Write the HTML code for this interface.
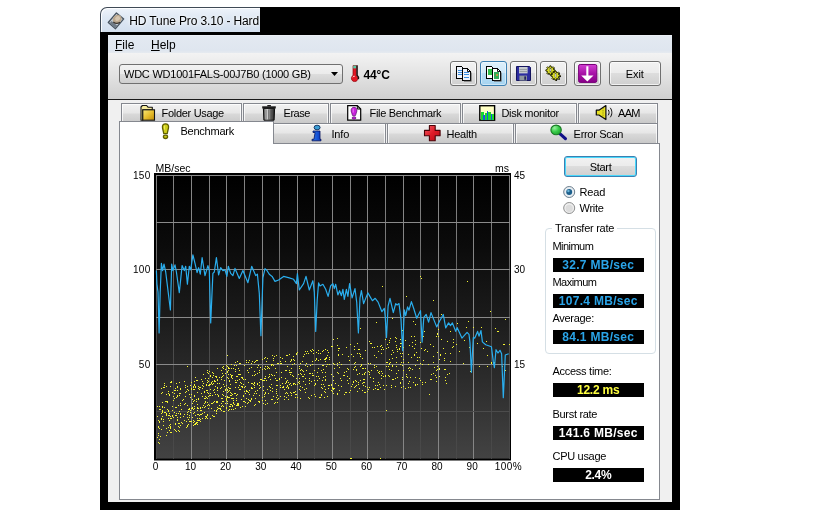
<!DOCTYPE html>
<html><head><meta charset="utf-8"><title>HD Tune Pro</title>
<style>
html,body{margin:0;padding:0;background:#fff;}
body{will-change:transform;width:840px;height:525px;overflow:hidden;position:relative;font-family:"Liberation Sans",sans-serif;font-size:11px;color:#000;}
.abs{position:absolute;}
.frame{left:100px;top:32px;width:580px;height:478px;background:#000;}
.title{overflow:hidden;left:100px;top:7px;width:160px;height:25px;box-sizing:border-box;border-top:1px solid #5a6470;border-left:1px solid #5a6470;border-radius:7px 0 0 0;background:linear-gradient(#eef3fa,#dee8f4 40%,#d3dfee);box-shadow:inset 1px 1px 0 rgba(255,255,255,.85);border-color:#3f4a56;}
.title .txt{left:28.3px;top:6px;font-size:12px;letter-spacing:-0.13px;white-space:nowrap;color:#000;text-shadow:0 0 6px #fff,0 0 3px #fff;}
.client{left:108px;top:35px;width:564px;height:467px;background:#f0f0f0;}
.menubar{left:108px;top:35px;width:564px;height:18.5px;background:linear-gradient(#f0f3f8 0,#e3e9f1 7%,#dfe6ef 82%,#e9ecf0 100%);}
.menubar span{position:absolute;top:3px;font-size:12px;}
.toolbar{left:108px;top:53px;width:564px;height:46px;background:linear-gradient(#f3f3f3,#e2e2e2 50%,#cfcfcf);}
.tbline{left:108px;top:98.7px;width:564px;height:1.3px;background:#1a1a1a;}
.combo{left:119px;top:63.5px;width:223.5px;height:20px;box-sizing:border-box;border:1px solid #707070;border-radius:3px;background:linear-gradient(#f2f2f2,#ebebeb 50%,#dddddd 50%,#cfcfcf);}
.combo .t{left:4px;top:3px;white-space:nowrap;font-size:11px;letter-spacing:-0.23px;}
.btn{box-sizing:border-box;border:1px solid #707070;border-radius:3px;background:linear-gradient(#f2f2f2,#ebebeb 50%,#dddddd 50%,#cfcfcf);box-shadow:inset 0 0 0 1px rgba(255,255,255,.7);}
.btn.hot{border-color:#3c7fb1;background:linear-gradient(#def0fb,#cfe8f9 50%,#b6ddf6 50%,#a6d4f0);box-shadow:inset 0 0 0 1px rgba(255,255,255,.45);}
.tab{box-sizing:border-box;border:1px solid #85888f;background:linear-gradient(#f2f2f2,#e6e6e6 48%,#d9d9d9 52%,#c9c9c9);white-space:nowrap;box-shadow:inset 1px 1px 0 rgba(255,255,255,.75),inset -1px 0 0 rgba(255,255,255,.75);}
.tab span,.seltab span{position:absolute;top:3px;}
.seltab{box-sizing:border-box;border:1px solid #85888f;border-bottom:none;background:#fff;}
.panel{left:119px;top:143px;width:541px;height:357px;box-sizing:border-box;border:1px solid #85888f;background:#fff;}
.lbl{white-space:nowrap;font-size:11px;}
.val{left:552.5px;width:91.5px;height:14px;background:#000;text-align:center;font-weight:bold;font-size:12px;line-height:14px;white-space:nowrap;letter-spacing:0.3px;}
.ax{font-size:10px;white-space:nowrap;line-height:10px;}
svg.chart{position:absolute;left:0;top:0;}
svg.ic{position:absolute;overflow:visible;}
.group{left:545px;top:227.5px;width:110.5px;height:126px;box-sizing:border-box;border:1px solid #d5dfe5;border-radius:4px;}
</style></head><body>
<div class="abs" style="left:260px;top:7px;width:420px;height:26px;background:#000"></div><div class="abs frame"></div>
<div class="abs title"><span class="abs txt">HD Tune Pro 3.10 - Hard</span>

</div>
<div class="abs client"></div>
<div class="abs menubar"><span style="left:7px"><u>F</u>ile</span><span style="left:43px"><u>H</u>elp</span></div>
<div class="abs toolbar"></div>
<div class="abs tbline"></div>
<div class="abs combo"><span class="abs t">WDC WD1001FALS-00J7B0 (1000 GB)</span>
<svg class="ic" style="left:210.5px;top:7px" width="8" height="5"><path d="M0 0H7L3.5 4Z" fill="#000"/></svg></div>
<!-- thermometer -->

<div class="abs lbl" style="left:363.6px;top:68.4px;font-weight:bold;font-size:12px;letter-spacing:-0.2px">44°C</div>
<!-- toolbar buttons -->
<div class="abs btn" style="left:450.3px;top:61.3px;width:26.4px;height:25.2px"></div>
<div class="abs btn hot" style="left:480px;top:61.3px;width:26.7px;height:25.2px"></div>
<div class="abs btn" style="left:510.3px;top:61.3px;width:26.4px;height:25.2px"></div>
<div class="abs btn" style="left:540px;top:61.3px;width:27px;height:25.2px"></div>
<div class="abs btn" style="left:574px;top:61.3px;width:27px;height:25.2px"></div>
<div class="abs btn" style="left:609px;top:61.3px;width:52px;height:25.2px"><span class="abs lbl" style="left:15.8px;top:5.5px;letter-spacing:-0.12px">Exit</span></div>
<!-- tabs row 1 -->
<div class="abs tab" style="left:121px;top:103px;width:121px;height:21px"></div>
<div class="abs tab" style="left:243px;top:103px;width:86px;height:21px"></div>
<div class="abs tab" style="left:330px;top:103px;width:131px;height:21px"></div>
<div class="abs tab" style="left:462px;top:103px;width:115px;height:21px"></div>
<div class="abs tab" style="left:578px;top:103px;width:80px;height:21px"></div>
<!-- tabs row 2 -->
<div class="abs tab" style="left:272px;top:123px;width:114px;height:21px"></div>
<div class="abs tab" style="left:387px;top:123px;width:127px;height:21px"></div>
<div class="abs tab" style="left:515px;top:123px;width:143px;height:21px"></div>
<div class="abs panel"></div>
<div class="abs seltab" style="left:119px;top:121px;width:155px;height:23px"></div>
<div class="abs lbl" style="left:161.5px;top:107.2px;letter-spacing:-0.3px">Folder Usage</div>
<div class="abs lbl" style="left:283.6px;top:107.2px;letter-spacing:-0.5px">Erase</div>
<div class="abs lbl" style="left:369.6px;top:107.2px;letter-spacing:-0.34px">File Benchmark</div>
<div class="abs lbl" style="left:501.4px;top:107.2px;letter-spacing:-0.3px">Disk monitor</div>
<div class="abs lbl" style="left:617.9px;top:107.2px;letter-spacing:-0.6px">AAM</div>
<div class="abs lbl" style="left:331.4px;top:127.6px;letter-spacing:-0.15px">Info</div>
<div class="abs lbl" style="left:446.4px;top:127.6px;letter-spacing:-0.2px">Health</div>
<div class="abs lbl" style="left:573.6px;top:127.6px;letter-spacing:-0.3px">Error Scan</div>
<div class="abs lbl" style="left:180.5px;top:125.2px;letter-spacing:-0.24px">Benchmark</div>

<svg class="chart" width="840" height="525" viewBox="0 0 840 525">
<defs>
<linearGradient id="fg" x1="0" y1="0" x2="1" y2="1"><stop offset="0" stop-color="#fbea7a"/><stop offset=".5" stop-color="#e8c030"/><stop offset="1" stop-color="#c08c08"/></linearGradient>
<linearGradient id="tg" x1="0" y1="0" x2="1" y2="0"><stop offset="0" stop-color="#3a3a3a"/><stop offset=".3" stop-color="#e2e2e2"/><stop offset=".55" stop-color="#8a8a8a"/><stop offset="1" stop-color="#181818"/></linearGradient>
<linearGradient id="pg" x1="0" y1="0" x2="0" y2="1"><stop offset="0" stop-color="#d240d2"/><stop offset=".5" stop-color="#a812a8"/><stop offset="1" stop-color="#880088"/></linearGradient>
<linearGradient id="rg" x1="0" y1="0" x2="1" y2="1"><stop offset="0" stop-color="#f0606a"/><stop offset=".5" stop-color="#e01c28"/><stop offset="1" stop-color="#b00c14"/></linearGradient>
<radialGradient id="gg" cx=".35" cy=".3" r=".8"><stop offset="0" stop-color="#9af0a0"/><stop offset=".5" stop-color="#38cc48"/><stop offset="1" stop-color="#1c9c2c"/></radialGradient>
<linearGradient id="ig" x1="0" y1="0" x2="1" y2="0"><stop offset="0" stop-color="#2a78f0"/><stop offset="1" stop-color="#0838c0"/></linearGradient>
</defs>
<!-- title icon -->
<path d="M116.4 12.9 L123.7 18.9 L115.5 28.7 L108.3 22.5Z" fill="#c5ced8" stroke="#46525e" stroke-width="1.3" stroke-linejoin="round"/>
<path d="M109.6 23.3 L115.3 28.2 L117.3 25.8 L111.6 21z" fill="#6f7b87"/>
<ellipse cx="117.2" cy="19.2" rx="4.7" ry="4.1" fill="#bba88f" transform="rotate(-38 117.2 19.2)"/>
<ellipse cx="117.6" cy="18.6" rx="2.6" ry="2.2" fill="#d6c6b0" transform="rotate(-38 117.6 18.6)"/>
<path d="M113.3 22 Q116.5 24.6 120 22.2" stroke="#3c3630" stroke-width="1.3" fill="none"/>
<!-- thermometer -->
<path d="M353 65.6h3.3v9.8a3.3 3.3 0 1 1 -3.3 0z" fill="#e31522" stroke="#8a0a10" stroke-width=".7"/>
<rect x="353.2" y="65.6" width="2.9" height="2.8" fill="#58c8a4"/>
<path d="M357.1 65.3v10a3.7 3.7 0 0 1 1.3 3.8" stroke="#160c0c" stroke-width="1.4" fill="none"/>
<path d="M352.9 77.2a1.6 1.6 0 0 1 1.8 -.9" stroke="#fff" stroke-width=".9" fill="none"/>
<!-- copy icon -->
<g shape-rendering="crispEdges"><path d="M456.5 66.5h5l2 2v10h-7z" fill="#eef4fc" stroke="#000"/><path d="M458 70.5h4M458 72.5h4M458 74.5h4" stroke="#3b8ee0"/>
<path d="M462.5 68.5h5l3 3v9h-8z" fill="#eef4fc" stroke="#000"/><path d="M464 72.5h5M464 74.5h5M464 77.5h5" stroke="#3b8ee0"/></g>
<path d="M467.5 68.5v3h3" fill="none" stroke="#000" stroke-width=".9"/><path d="M471.3 72.5v8.8h-7.3" stroke="#666" stroke-width=".8" fill="none"/>
<!-- copy image icon -->
<g shape-rendering="crispEdges"><path d="M486.5 66.5h5l2 2v10h-7z" fill="#fff" stroke="#000"/><rect x="488" y="69" width="4" height="6" fill="#2fc04a"/>
<path d="M492.5 68.5h5l3 3v9h-8z" fill="#fff" stroke="#000"/><rect x="494" y="72" width="5" height="7" fill="#35ac5a"/><rect x="496" y="74" width="2" height="2" fill="#b89a40"/></g>
<path d="M497.5 68.5v3h3" fill="none" stroke="#000" stroke-width=".9"/><path d="M501.3 72.5v8.8h-7.3" stroke="#666" stroke-width=".8" fill="none"/>
<!-- floppy -->
<path d="M516.5 66.5h13l1 1v13h-14z" fill="#2c2ca0" stroke="#14145e"/><rect x="519" y="67" width="8.6" height="6.4" fill="#c6cacf"/><path d="M519.5 69.5h7.6M519.5 71.5h7.6" stroke="#8e9499" stroke-width=".8"/><rect x="519.4" y="75.6" width="7.6" height="4.9" fill="#8f979f"/><rect x="524.3" y="76.4" width="1.8" height="3.4" fill="#22225e"/>
<!-- gears -->
<path d="M555.77 70.65L555.77 71.75L554.38 72.09L554.08 72.82L554.82 74.04L554.04 74.82L552.82 74.08L552.09 74.38L551.75 75.77L550.65 75.77L550.31 74.38L549.58 74.08L548.36 74.82L547.58 74.04L548.32 72.82L548.02 72.09L546.63 71.75L546.63 70.65L548.02 70.31L548.32 69.58L547.58 68.36L548.36 67.58L549.58 68.32L550.31 68.02L550.65 66.63L551.75 66.63L552.09 68.02L552.82 68.32L554.04 67.58L554.82 68.36L554.08 69.58L554.38 70.31Z" fill="#111"/><path d="M560.97 75.85L560.97 76.95L559.58 77.29L559.28 78.02L560.02 79.24L559.24 80.02L558.02 79.28L557.29 79.58L556.95 80.97L555.85 80.97L555.51 79.58L554.78 79.28L553.56 80.02L552.78 79.24L553.52 78.02L553.22 77.29L551.83 76.95L551.83 75.85L553.22 75.51L553.52 74.78L552.78 73.56L553.56 72.78L554.78 73.52L555.51 73.22L555.85 71.83L556.95 71.83L557.29 73.22L558.02 73.52L559.24 72.78L560.02 73.56L559.28 74.78L559.58 75.51Z" fill="#111"/>
<path d="M554.97 69.85L554.97 70.95L553.58 71.29L553.28 72.02L554.02 73.24L553.24 74.02L552.02 73.28L551.29 73.58L550.95 74.97L549.85 74.97L549.51 73.58L548.78 73.28L547.56 74.02L546.78 73.24L547.52 72.02L547.22 71.29L545.83 70.95L545.83 69.85L547.22 69.51L547.52 68.78L546.78 67.56L547.56 66.78L548.78 67.52L549.51 67.22L549.85 65.83L550.95 65.83L551.29 67.22L552.02 67.52L553.24 66.78L554.02 67.56L553.28 68.78L553.58 69.51Z" fill="#d8dc24" stroke="#262600" stroke-width=".9"/><path d="M560.07 75.05L560.07 76.15L558.68 76.49L558.38 77.22L559.12 78.44L558.34 79.22L557.12 78.48L556.39 78.78L556.05 80.17L554.95 80.17L554.61 78.78L553.88 78.48L552.66 79.22L551.88 78.44L552.62 77.22L552.32 76.49L550.93 76.15L550.93 75.05L552.32 74.71L552.62 73.98L551.88 72.76L552.66 71.98L553.88 72.72L554.61 72.42L554.95 71.03L556.05 71.03L556.39 72.42L557.12 72.72L558.34 71.98L559.12 72.76L558.38 73.98L558.68 74.71Z" fill="#d8dc24" stroke="#262600" stroke-width=".9"/>
<rect x="549.9" y="68.2" width="1.1" height="3.8" fill="#f0f0f0" stroke="#444" stroke-width=".4"/><rect x="555" y="73.4" width="1.1" height="3.8" fill="#f0f0f0" stroke="#444" stroke-width=".4"/>
<!-- purple arrow -->
<rect x="578.6" y="64.5" width="18.2" height="17.9" rx="1.6" fill="url(#pg)" stroke="#780078"/><path d="M586.3 66.2h2.1v9.3h5.1l-6.15 6.1-6.15-6.1h5.1z" fill="#fff"/>
<!-- folder -->
<path d="M141 107 142.4 105.5h4.2l1.4 1.7h4.3v2.6H142.8v10.4H141z" fill="#f6eb9c" stroke="#141414" stroke-width="1.1" stroke-linejoin="round"/>
<rect x="142.8" y="109.8" width="11.7" height="10.4" fill="url(#fg)" stroke="#141414" stroke-width="1.1"/>
<!-- trash -->
<path d="M263.4 108.4h11.2l-.5 11.8h-10.2z" fill="url(#tg)" stroke="#0a0a0a" stroke-width="1"/>
<path d="M266.3 109.5v10M268.6 109.5v10M271 109.5v10" stroke="#222" stroke-width=".6" opacity=".7"/>
<rect x="262.2" y="106.3" width="13.6" height="2.2" fill="#1c1c1c"/><rect x="267.3" y="105" width="3.6" height="1.5" fill="#1c1c1c"/>
<!-- file benchmark -->
<path d="M347.7 105.6h9.6l3.4 3.4v11.2h-13z" fill="#fff" stroke="#000" stroke-width="1.2"/><path d="M357.3 105.6v3.4h3.4" fill="none" stroke="#000" stroke-width="1"/>
<path d="M354 107.3c2.2 0 3.2 1.8 2.8 3.9l-1.3 4.4h-3l-1.3-4.4c-.4-2.1.6-3.9 2.8-3.9z" fill="#c822dc" stroke="#5c0a72" stroke-width=".7"/><path d="M353.2 108.6v4" stroke="#ee8af8" stroke-width=".9"/>
<ellipse cx="354" cy="118" rx="1.9" ry="1.2" fill="#c822dc" stroke="#5c0a72" stroke-width=".7"/>
<!-- disk monitor -->
<rect x="479.8" y="105.7" width="14.8" height="14.5" fill="#ffffc4" stroke="#000" stroke-width="1.4"/>
<g shape-rendering="crispEdges"><rect x="481" y="112" width="3" height="8" fill="#1cd82c"/><rect x="483" y="115" width="2" height="5" fill="#1c58d8"/><rect x="485" y="113" width="2" height="7" fill="#1cd82c"/><rect x="487" y="111" width="1" height="9" fill="#1c58d8"/><rect x="488" y="112" width="3" height="8" fill="#1cd82c"/><rect x="491" y="114" width="2" height="6" fill="#1c58d8"/><rect x="492" y="114" width="2" height="6" fill="#1cd82c"/></g>
<!-- speaker -->
<path d="M596.3 110.2h2.6l7-4.6v14l-7-4.6h-2.6z" fill="#e6e022" stroke="#0a0a0a" stroke-width="1.2" stroke-linejoin="round"/><path d="M603 108v9.6" stroke="#6a6600" stroke-width=".7" stroke-dasharray="1.2 1"/>
<path d="M608.2 109.8c1.2 1.6 1.2 3.9 0 5.5M610.2 107.8c2.2 2.8 2.2 6.700 0 9.500" stroke="#111" stroke-width="1" fill="none"/>
<!-- exclamation -->
<path d="M165.5 123.8c2.300 0 3.400 1.800 3 4l-1.300 5.800h-3.400l-1.300-5.800c-.4-2.200.7-4 3-4z" fill="#cfcf18" stroke="#5e5e00" stroke-width="1.3"/>
<path d="M164.600 125.600v4" stroke="#f0f070" stroke-width=".9"/>
<ellipse cx="165.5" cy="136.850" rx="2.100" ry="1.650" fill="#cfcf18" stroke="#5e5e00" stroke-width="1.3"/>
<!-- info -->
<ellipse cx="317.1" cy="127.500" rx="3" ry="2.300" fill="#3c9ed4" stroke="#0c2c5c" stroke-width=".9"/>
<path d="M313 131h7v8.300h1v1.500h-9v-1.500h1.900l1.200-6.800h-2.100z" fill="url(#ig)" stroke="#04105c" stroke-width=".8" stroke-linejoin="round"/>
<!-- cross -->
<path d="M429.400 125.500h5.800v4.900h4.900v5.400h-4.900v4.900h-5.800v-4.900h-4.900v-5.400h4.900z" fill="url(#rg)" stroke="#4a0408" stroke-width="1.100" stroke-linejoin="round"/>
<!-- magnifier -->
<path d="M559.800 133.600l5.600 5" stroke="#101088" stroke-width="3.200" stroke-linecap="round"/>
<ellipse cx="556.100" cy="129.900" rx="5.200" ry="4.800" fill="url(#gg)" stroke="#187a24" stroke-width="1.100"/>
</svg>
<svg class="chart" width="840" height="525" viewBox="0 0 840 525">
<defs><linearGradient id="bg" x1="0" y1="0" x2="0" y2="1"><stop offset="0" stop-color="#000"/><stop offset="0.25" stop-color="#0b0b0b"/><stop offset="0.5" stop-color="#1b1b1b"/><stop offset="0.75" stop-color="#2e2e2e"/><stop offset="1" stop-color="#434343"/></linearGradient><linearGradient id="mg" gradientUnits="userSpaceOnUse" x1="0" y1="175" x2="0" y2="459"><stop offset="0" stop-color="#848484"/><stop offset="0.22" stop-color="#787878"/><stop offset="0.4" stop-color="#5a5a5a"/><stop offset="0.6" stop-color="#4c4c4c"/><stop offset="0.8" stop-color="#484848"/><stop offset="1" stop-color="#494949"/></linearGradient></defs>
<rect x="154" y="173" width="357" height="287.5" fill="#000"/>
<rect x="156" y="175" width="354" height="283.6" fill="url(#bg)"/>
<g shape-rendering="crispEdges" fill="none" stroke-width="1">
<path d="M156.5 175V458.6M173.5 175V458.6M209.5 175V458.6M244.5 175V458.6M279.5 175V458.6M314.5 175V458.6M350.5 175V458.6M385.5 175V458.6M420.5 175V458.6M456.5 175V458.6M491.5 175V458.6M509.5 175V458.6" stroke="url(#mg)"/>
<path d="M191.5 175V458.6M226.5 175V458.6M262.5 175V458.6M297.5 175V458.6M332.5 175V458.6M367.5 175V458.6M403.5 175V458.6M438.5 175V458.6M473.5 175V458.6" stroke="#868686"/>
<path d="M156 175.5H510" stroke="#8a8a8a"/>
<path d="M156 222.5H510" stroke="#8a8a8a"/>
<path d="M156 269.5H510" stroke="#8a8a8a"/>
<path d="M156 317.5H510" stroke="#8a8a8a"/>
<path d="M156 364.5H510" stroke="#8a8a8a"/>
<path d="M156 411.5H510" stroke="#4c4c4c"/>
</g>
<path id="dots" d="M271 374h1v1h-1zM346 392h1v1h-1zM170 432h1v1h-1zM201 393h1v1h-1zM360 328h1v1h-1zM259 401h1v1h-1zM445 353h1v1h-1zM288 399h1v1h-1zM230 392h1v1h-1zM363 379h1v1h-1zM403 359h1v1h-1zM199 387h1v1h-1zM329 364h1v1h-1zM268 377h1v1h-1zM391 354h1v1h-1zM257 367h1v1h-1zM216 413h1v1h-1zM203 405h1v1h-1zM185 403h1v1h-1zM255 391h1v1h-1zM219 405h1v1h-1zM365 392h1v1h-1zM287 355h1v1h-1zM395 341h1v1h-1zM295 397h1v1h-1zM179 423h1v1h-1zM277 402h1v1h-1zM193 425h1v1h-1zM373 381h1v1h-1zM285 361h1v1h-1zM321 394h1v1h-1zM278 363h1v1h-1zM165 412h1v1h-1zM348 369h1v1h-1zM249 400h1v1h-1zM273 365h1v1h-1zM237 394h1v1h-1zM255 374h1v1h-1zM285 393h1v1h-1zM229 368h1v1h-1zM326 357h1v1h-1zM325 358h1v1h-1zM296 354h1v1h-1zM217 409h1v1h-1zM441 339h1v1h-1zM389 363h1v1h-1zM162 406h1v1h-1zM231 398h1v1h-1zM364 373h1v1h-1zM318 353h1v1h-1zM344 394h1v1h-1zM222 376h1v1h-1zM353 369h1v1h-1zM433 356h1v1h-1zM313 375h1v1h-1zM401 362h1v1h-1zM248 362h1v1h-1zM205 401h1v1h-1zM242 378h1v1h-1zM207 372h1v1h-1zM450 361h1v1h-1zM276 389h1v1h-1zM164 412h1v1h-1zM377 389h1v1h-1zM194 424h1v1h-1zM252 388h1v1h-1zM210 393h1v1h-1zM189 394h1v1h-1zM183 399h1v1h-1zM187 426h1v1h-1zM317 372h1v1h-1zM251 383h1v1h-1zM196 423h1v1h-1zM267 368h1v1h-1zM333 376h1v1h-1zM162 412h1v1h-1zM194 406h1v1h-1zM381 375h1v1h-1zM203 386h1v1h-1zM215 376h1v1h-1zM393 379h1v1h-1zM319 378h1v1h-1zM350 344h1v1h-1zM283 386h1v1h-1zM334 368h1v1h-1zM189 421h1v1h-1zM239 385h1v1h-1zM210 375h1v1h-1zM206 397h1v1h-1zM238 404h1v1h-1zM194 400h1v1h-1zM329 357h1v1h-1zM334 364h1v1h-1zM417 384h1v1h-1zM414 348h1v1h-1zM331 374h1v1h-1zM383 385h1v1h-1zM419 357h1v1h-1zM252 375h1v1h-1zM259 385h1v1h-1zM199 415h1v1h-1zM487 355h1v1h-1zM252 361h1v1h-1zM362 368h1v1h-1zM204 398h1v1h-1zM405 340h1v1h-1zM166 413h1v1h-1zM263 390h1v1h-1zM453 342h1v1h-1zM199 389h1v1h-1zM259 388h1v1h-1zM365 372h1v1h-1zM174 390h1v1h-1zM251 399h1v1h-1zM174 412h1v1h-1zM384 389h1v1h-1zM202 407h1v1h-1zM249 394h1v1h-1zM296 394h1v1h-1zM235 362h1v1h-1zM206 417h1v1h-1zM189 417h1v1h-1zM302 376h1v1h-1zM276 391h1v1h-1zM201 393h1v1h-1zM233 400h1v1h-1zM165 401h1v1h-1zM324 397h1v1h-1zM245 402h1v1h-1zM351 354h1v1h-1zM264 394h1v1h-1zM403 386h1v1h-1zM362 383h1v1h-1zM161 419h1v1h-1zM324 386h1v1h-1zM405 388h1v1h-1zM395 378h1v1h-1zM169 415h1v1h-1zM227 377h1v1h-1zM229 397h1v1h-1zM238 374h1v1h-1zM223 395h1v1h-1zM296 353h1v1h-1zM175 415h1v1h-1zM273 358h1v1h-1zM168 418h1v1h-1zM274 403h1v1h-1zM201 414h1v1h-1zM309 378h1v1h-1zM168 393h1v1h-1zM171 432h1v1h-1zM374 355h1v1h-1zM254 371h1v1h-1zM166 415h1v1h-1zM245 386h1v1h-1zM221 379h1v1h-1zM272 388h1v1h-1zM185 392h1v1h-1zM180 405h1v1h-1zM187 405h1v1h-1zM314 380h1v1h-1zM200 410h1v1h-1zM227 401h1v1h-1zM272 355h1v1h-1zM239 379h1v1h-1zM193 386h1v1h-1zM479 366h1v1h-1zM224 386h1v1h-1zM315 360h1v1h-1zM194 396h1v1h-1zM287 393h1v1h-1zM229 397h1v1h-1zM222 405h1v1h-1zM350 390h1v1h-1zM189 394h1v1h-1zM257 360h1v1h-1zM357 374h1v1h-1zM226 388h1v1h-1zM319 397h1v1h-1zM188 411h1v1h-1zM208 396h1v1h-1zM195 386h1v1h-1zM227 366h1v1h-1zM327 350h1v1h-1zM447 341h1v1h-1zM449 373h1v1h-1zM339 390h1v1h-1zM171 382h1v1h-1zM198 398h1v1h-1zM265 378h1v1h-1zM389 359h1v1h-1zM329 359h1v1h-1zM318 376h1v1h-1zM202 418h1v1h-1zM337 365h1v1h-1zM337 372h1v1h-1zM225 390h1v1h-1zM180 393h1v1h-1zM444 358h1v1h-1zM230 388h1v1h-1zM170 428h1v1h-1zM216 411h1v1h-1zM381 345h1v1h-1zM194 396h1v1h-1zM438 329h1v1h-1zM313 350h1v1h-1zM246 360h1v1h-1zM391 387h1v1h-1zM374 367h1v1h-1zM204 391h1v1h-1zM282 387h1v1h-1zM229 390h1v1h-1zM210 389h1v1h-1zM433 362h1v1h-1zM355 362h1v1h-1zM245 406h1v1h-1zM300 398h1v1h-1zM161 388h1v1h-1zM227 389h1v1h-1zM444 369h1v1h-1zM174 393h1v1h-1zM159 406h1v1h-1zM237 394h1v1h-1zM251 388h1v1h-1zM341 364h1v1h-1zM233 409h1v1h-1zM240 363h1v1h-1zM273 360h1v1h-1zM265 376h1v1h-1zM166 386h1v1h-1zM207 418h1v1h-1zM417 357h1v1h-1zM229 409h1v1h-1zM258 401h1v1h-1zM229 388h1v1h-1zM257 390h1v1h-1zM168 415h1v1h-1zM279 378h1v1h-1zM446 383h1v1h-1zM159 422h1v1h-1zM222 398h1v1h-1zM257 373h1v1h-1zM196 422h1v1h-1zM378 372h1v1h-1zM470 371h1v1h-1zM239 385h1v1h-1zM280 396h1v1h-1zM217 379h1v1h-1zM201 379h1v1h-1zM224 380h1v1h-1zM211 408h1v1h-1zM341 380h1v1h-1zM193 422h1v1h-1zM226 407h1v1h-1zM294 383h1v1h-1zM401 356h1v1h-1zM207 402h1v1h-1zM305 365h1v1h-1zM383 376h1v1h-1zM191 388h1v1h-1zM379 371h1v1h-1zM376 357h1v1h-1zM221 377h1v1h-1zM170 428h1v1h-1zM193 401h1v1h-1zM231 393h1v1h-1zM200 407h1v1h-1zM254 405h1v1h-1zM305 384h1v1h-1zM236 365h1v1h-1zM234 393h1v1h-1zM203 383h1v1h-1zM322 388h1v1h-1zM281 363h1v1h-1zM322 372h1v1h-1zM290 383h1v1h-1zM158 433h1v1h-1zM263 386h1v1h-1zM389 340h1v1h-1zM177 386h1v1h-1zM206 390h1v1h-1zM245 402h1v1h-1zM430 379h1v1h-1zM436 336h1v1h-1zM453 346h1v1h-1zM250 401h1v1h-1zM178 426h1v1h-1zM333 339h1v1h-1zM322 365h1v1h-1zM289 354h1v1h-1zM167 401h1v1h-1zM337 338h1v1h-1zM377 346h1v1h-1zM324 359h1v1h-1zM310 373h1v1h-1zM299 389h1v1h-1zM436 370h1v1h-1zM433 346h1v1h-1zM349 378h1v1h-1zM402 353h1v1h-1zM392 350h1v1h-1zM221 377h1v1h-1zM388 347h1v1h-1zM355 380h1v1h-1zM269 374h1v1h-1zM176 431h1v1h-1zM162 410h1v1h-1zM302 370h1v1h-1zM210 418h1v1h-1zM200 419h1v1h-1zM202 388h1v1h-1zM415 385h1v1h-1zM414 355h1v1h-1zM410 387h1v1h-1zM445 369h1v1h-1zM215 394h1v1h-1zM286 382h1v1h-1zM208 404h1v1h-1zM379 373h1v1h-1zM357 391h1v1h-1zM274 356h1v1h-1zM369 372h1v1h-1zM290 374h1v1h-1zM158 427h1v1h-1zM172 392h1v1h-1zM358 349h1v1h-1zM279 378h1v1h-1zM228 367h1v1h-1zM321 387h1v1h-1zM188 390h1v1h-1zM325 389h1v1h-1zM221 398h1v1h-1zM299 378h1v1h-1zM289 372h1v1h-1zM212 403h1v1h-1zM164 383h1v1h-1zM328 385h1v1h-1zM170 427h1v1h-1zM175 388h1v1h-1zM180 413h1v1h-1zM295 394h1v1h-1zM171 418h1v1h-1zM174 398h1v1h-1zM208 373h1v1h-1zM262 369h1v1h-1zM271 399h1v1h-1zM216 410h1v1h-1zM161 418h1v1h-1zM235 369h1v1h-1zM206 416h1v1h-1zM316 358h1v1h-1zM378 382h1v1h-1zM208 408h1v1h-1zM212 377h1v1h-1zM216 402h1v1h-1zM197 422h1v1h-1zM392 366h1v1h-1zM248 392h1v1h-1zM191 382h1v1h-1zM413 321h1v1h-1zM277 402h1v1h-1zM343 375h1v1h-1zM234 404h1v1h-1zM226 408h1v1h-1zM332 387h1v1h-1zM362 390h1v1h-1zM177 417h1v1h-1zM162 416h1v1h-1zM251 367h1v1h-1zM215 381h1v1h-1zM314 394h1v1h-1zM270 387h1v1h-1zM179 382h1v1h-1zM338 354h1v1h-1zM236 405h1v1h-1zM445 380h1v1h-1zM226 385h1v1h-1zM193 389h1v1h-1zM331 384h1v1h-1zM300 373h1v1h-1zM209 384h1v1h-1zM294 360h1v1h-1zM431 374h1v1h-1zM176 383h1v1h-1zM245 379h1v1h-1zM344 375h1v1h-1zM164 385h1v1h-1zM469 347h1v1h-1zM396 362h1v1h-1zM376 366h1v1h-1zM265 400h1v1h-1zM252 383h1v1h-1zM201 410h1v1h-1zM259 402h1v1h-1zM228 391h1v1h-1zM373 378h1v1h-1zM235 393h1v1h-1zM161 393h1v1h-1zM353 381h1v1h-1zM213 375h1v1h-1zM179 411h1v1h-1zM195 377h1v1h-1zM211 403h1v1h-1zM464 340h1v1h-1zM359 353h1v1h-1zM371 370h1v1h-1zM412 369h1v1h-1zM292 364h1v1h-1zM333 388h1v1h-1zM208 393h1v1h-1zM161 413h1v1h-1zM339 362h1v1h-1zM283 387h1v1h-1zM395 386h1v1h-1zM298 374h1v1h-1zM312 349h1v1h-1zM217 368h1v1h-1zM338 350h1v1h-1zM212 395h1v1h-1zM223 384h1v1h-1zM381 371h1v1h-1zM265 404h1v1h-1zM392 365h1v1h-1zM251 383h1v1h-1zM359 388h1v1h-1zM425 382h1v1h-1zM179 393h1v1h-1zM409 381h1v1h-1zM192 399h1v1h-1zM315 396h1v1h-1zM312 373h1v1h-1zM264 358h1v1h-1zM294 392h1v1h-1zM436 377h1v1h-1zM223 401h1v1h-1zM197 407h1v1h-1zM180 389h1v1h-1zM243 396h1v1h-1zM169 420h1v1h-1zM406 376h1v1h-1zM202 381h1v1h-1zM213 383h1v1h-1zM237 404h1v1h-1zM364 382h1v1h-1zM232 405h1v1h-1zM348 356h1v1h-1zM389 376h1v1h-1zM187 386h1v1h-1zM390 362h1v1h-1zM333 393h1v1h-1zM237 376h1v1h-1zM254 375h1v1h-1zM281 372h1v1h-1zM245 393h1v1h-1zM221 370h1v1h-1zM408 387h1v1h-1zM227 390h1v1h-1zM382 347h1v1h-1zM409 367h1v1h-1zM280 363h1v1h-1zM258 365h1v1h-1zM174 429h1v1h-1zM231 376h1v1h-1zM402 349h1v1h-1zM256 360h1v1h-1zM378 389h1v1h-1zM308 353h1v1h-1zM425 349h1v1h-1zM249 360h1v1h-1zM349 392h1v1h-1zM302 387h1v1h-1zM241 386h1v1h-1zM207 405h1v1h-1zM217 388h1v1h-1zM197 408h1v1h-1zM178 423h1v1h-1zM315 384h1v1h-1zM285 383h1v1h-1zM421 348h1v1h-1zM356 370h1v1h-1zM224 411h1v1h-1zM246 390h1v1h-1zM222 373h1v1h-1zM216 376h1v1h-1zM272 364h1v1h-1zM287 386h1v1h-1zM241 383h1v1h-1zM331 390h1v1h-1zM362 358h1v1h-1zM189 408h1v1h-1zM412 342h1v1h-1zM257 383h1v1h-1zM276 372h1v1h-1zM261 379h1v1h-1zM226 398h1v1h-1zM443 348h1v1h-1zM262 359h1v1h-1zM385 375h1v1h-1zM167 402h1v1h-1zM187 412h1v1h-1zM304 374h1v1h-1zM197 380h1v1h-1zM197 414h1v1h-1zM344 372h1v1h-1zM237 405h1v1h-1zM364 374h1v1h-1zM424 331h1v1h-1zM193 409h1v1h-1zM430 344h1v1h-1zM240 407h1v1h-1zM232 378h1v1h-1zM216 401h1v1h-1zM200 387h1v1h-1zM411 357h1v1h-1zM197 392h1v1h-1zM225 373h1v1h-1zM197 420h1v1h-1zM222 401h1v1h-1zM291 359h1v1h-1zM491 362h1v1h-1zM439 376h1v1h-1zM396 366h1v1h-1zM184 420h1v1h-1zM365 386h1v1h-1zM322 380h1v1h-1zM159 421h1v1h-1zM505 370h1v1h-1zM253 384h1v1h-1zM357 343h1v1h-1zM169 395h1v1h-1zM381 378h1v1h-1zM397 349h1v1h-1zM280 385h1v1h-1zM276 355h1v1h-1zM286 392h1v1h-1zM205 378h1v1h-1zM314 385h1v1h-1zM180 417h1v1h-1zM363 385h1v1h-1zM254 405h1v1h-1zM251 398h1v1h-1zM228 370h1v1h-1zM226 365h1v1h-1zM185 385h1v1h-1zM205 396h1v1h-1zM232 375h1v1h-1zM300 386h1v1h-1zM303 371h1v1h-1zM331 385h1v1h-1zM162 411h1v1h-1zM177 396h1v1h-1zM190 421h1v1h-1zM189 409h1v1h-1zM248 372h1v1h-1zM255 361h1v1h-1zM160 409h1v1h-1zM237 403h1v1h-1zM178 405h1v1h-1zM210 384h1v1h-1zM214 380h1v1h-1zM381 349h1v1h-1zM195 423h1v1h-1zM178 413h1v1h-1zM236 398h1v1h-1zM239 374h1v1h-1zM233 403h1v1h-1zM257 384h1v1h-1zM214 389h1v1h-1zM231 395h1v1h-1zM262 400h1v1h-1zM160 436h1v1h-1zM191 394h1v1h-1zM502 366h1v1h-1zM400 364h1v1h-1zM309 398h1v1h-1zM199 418h1v1h-1zM220 408h1v1h-1zM333 380h1v1h-1zM233 368h1v1h-1zM253 395h1v1h-1zM172 415h1v1h-1zM285 370h1v1h-1zM349 360h1v1h-1zM298 382h1v1h-1zM293 383h1v1h-1zM509 344h1v1h-1zM247 391h1v1h-1zM227 372h1v1h-1zM477 343h1v1h-1zM385 376h1v1h-1zM157 406h1v1h-1zM240 374h1v1h-1zM408 362h1v1h-1zM396 357h1v1h-1zM236 398h1v1h-1zM341 386h1v1h-1zM342 354h1v1h-1zM218 395h1v1h-1zM463 363h1v1h-1zM445 377h1v1h-1zM193 387h1v1h-1zM317 380h1v1h-1zM402 365h1v1h-1zM424 350h1v1h-1zM340 378h1v1h-1zM291 393h1v1h-1zM177 396h1v1h-1zM271 364h1v1h-1zM228 374h1v1h-1zM288 382h1v1h-1zM408 368h1v1h-1zM293 356h1v1h-1zM288 388h1v1h-1zM423 360h1v1h-1zM166 415h1v1h-1zM312 375h1v1h-1zM299 368h1v1h-1zM199 420h1v1h-1zM193 389h1v1h-1zM176 397h1v1h-1zM176 413h1v1h-1zM275 402h1v1h-1zM254 393h1v1h-1zM337 393h1v1h-1zM228 387h1v1h-1zM321 370h1v1h-1zM175 407h1v1h-1zM356 381h1v1h-1zM260 367h1v1h-1zM177 387h1v1h-1zM182 423h1v1h-1zM333 363h1v1h-1zM231 404h1v1h-1zM230 406h1v1h-1zM389 342h1v1h-1zM212 372h1v1h-1zM260 379h1v1h-1zM354 346h1v1h-1zM453 339h1v1h-1zM295 384h1v1h-1zM236 405h1v1h-1zM396 345h1v1h-1zM259 370h1v1h-1zM368 389h1v1h-1zM483 348h1v1h-1zM388 375h1v1h-1zM244 401h1v1h-1zM262 380h1v1h-1zM367 391h1v1h-1zM191 421h1v1h-1zM281 372h1v1h-1zM217 401h1v1h-1zM210 376h1v1h-1zM332 391h1v1h-1zM215 394h1v1h-1zM227 403h1v1h-1zM242 386h1v1h-1zM162 416h1v1h-1zM238 403h1v1h-1zM168 411h1v1h-1zM361 364h1v1h-1zM407 377h1v1h-1zM503 344h1v1h-1zM481 327h1v1h-1zM300 390h1v1h-1zM396 373h1v1h-1zM227 397h1v1h-1zM326 358h1v1h-1zM227 371h1v1h-1zM190 412h1v1h-1zM420 342h1v1h-1zM365 350h1v1h-1zM239 389h1v1h-1zM300 370h1v1h-1zM277 363h1v1h-1zM159 443h1v1h-1zM370 377h1v1h-1zM375 388h1v1h-1zM200 421h1v1h-1zM222 367h1v1h-1zM236 382h1v1h-1zM296 354h1v1h-1zM450 353h1v1h-1zM281 377h1v1h-1zM338 348h1v1h-1zM392 358h1v1h-1zM289 370h1v1h-1zM332 346h1v1h-1zM353 356h1v1h-1zM169 430h1v1h-1zM173 396h1v1h-1zM260 387h1v1h-1zM395 337h1v1h-1zM400 382h1v1h-1zM279 379h1v1h-1zM214 410h1v1h-1zM176 415h1v1h-1zM227 392h1v1h-1zM249 390h1v1h-1zM251 363h1v1h-1zM431 379h1v1h-1zM323 365h1v1h-1zM254 362h1v1h-1zM259 395h1v1h-1zM172 406h1v1h-1zM243 384h1v1h-1zM396 347h1v1h-1zM265 357h1v1h-1zM419 368h1v1h-1zM280 361h1v1h-1zM276 385h1v1h-1zM361 365h1v1h-1zM452 347h1v1h-1zM373 389h1v1h-1zM232 406h1v1h-1zM284 399h1v1h-1zM272 375h1v1h-1zM254 387h1v1h-1zM441 339h1v1h-1zM236 395h1v1h-1zM357 353h1v1h-1zM346 347h1v1h-1zM306 370h1v1h-1zM363 368h1v1h-1zM237 361h1v1h-1zM325 376h1v1h-1zM277 385h1v1h-1zM225 389h1v1h-1zM227 403h1v1h-1zM179 431h1v1h-1zM250 400h1v1h-1zM173 417h1v1h-1zM193 420h1v1h-1zM202 396h1v1h-1zM231 409h1v1h-1zM415 344h1v1h-1zM204 412h1v1h-1zM290 361h1v1h-1zM320 353h1v1h-1zM182 400h1v1h-1zM328 388h1v1h-1zM194 421h1v1h-1zM318 368h1v1h-1zM312 364h1v1h-1zM323 365h1v1h-1zM241 377h1v1h-1zM207 392h1v1h-1zM241 399h1v1h-1zM170 382h1v1h-1zM170 424h1v1h-1zM234 365h1v1h-1zM211 382h1v1h-1zM223 406h1v1h-1zM194 381h1v1h-1zM158 420h1v1h-1zM184 404h1v1h-1zM297 352h1v1h-1zM200 414h1v1h-1zM196 399h1v1h-1zM190 385h1v1h-1zM193 413h1v1h-1zM209 371h1v1h-1zM159 439h1v1h-1zM368 371h1v1h-1zM168 391h1v1h-1zM406 374h1v1h-1zM271 384h1v1h-1zM254 385h1v1h-1zM194 412h1v1h-1zM286 355h1v1h-1zM189 415h1v1h-1zM162 402h1v1h-1zM219 383h1v1h-1zM245 406h1v1h-1zM231 364h1v1h-1zM264 396h1v1h-1zM207 398h1v1h-1zM399 348h1v1h-1zM192 408h1v1h-1zM190 412h1v1h-1zM168 427h1v1h-1zM255 398h1v1h-1zM213 390h1v1h-1zM221 410h1v1h-1zM292 375h1v1h-1zM180 388h1v1h-1zM412 346h1v1h-1zM286 397h1v1h-1zM437 366h1v1h-1zM236 400h1v1h-1zM286 381h1v1h-1zM175 390h1v1h-1zM167 432h1v1h-1zM408 383h1v1h-1zM218 396h1v1h-1zM181 409h1v1h-1zM352 384h1v1h-1zM196 401h1v1h-1zM217 407h1v1h-1zM183 416h1v1h-1zM391 385h1v1h-1zM327 396h1v1h-1zM338 373h1v1h-1zM346 371h1v1h-1zM386 348h1v1h-1zM221 387h1v1h-1zM186 427h1v1h-1zM206 384h1v1h-1zM396 338h1v1h-1zM325 349h1v1h-1zM233 402h1v1h-1zM318 350h1v1h-1zM300 363h1v1h-1zM214 416h1v1h-1zM248 382h1v1h-1zM206 416h1v1h-1zM210 395h1v1h-1zM240 382h1v1h-1zM175 424h1v1h-1zM338 385h1v1h-1zM225 369h1v1h-1zM221 403h1v1h-1zM286 370h1v1h-1zM323 350h1v1h-1zM385 339h1v1h-1zM239 363h1v1h-1zM416 352h1v1h-1zM202 413h1v1h-1zM170 416h1v1h-1zM184 381h1v1h-1zM282 383h1v1h-1zM327 364h1v1h-1zM226 399h1v1h-1zM364 392h1v1h-1zM413 382h1v1h-1zM402 379h1v1h-1zM164 387h1v1h-1zM209 395h1v1h-1zM304 389h1v1h-1zM187 425h1v1h-1zM402 347h1v1h-1zM277 395h1v1h-1zM354 387h1v1h-1zM293 392h1v1h-1zM440 354h1v1h-1zM436 381h1v1h-1zM356 385h1v1h-1zM195 415h1v1h-1zM306 353h1v1h-1zM235 380h1v1h-1zM229 380h1v1h-1zM212 381h1v1h-1zM437 369h1v1h-1zM177 420h1v1h-1zM210 376h1v1h-1zM227 389h1v1h-1zM285 378h1v1h-1zM194 408h1v1h-1zM246 398h1v1h-1zM325 359h1v1h-1zM194 395h1v1h-1zM170 386h1v1h-1zM321 384h1v1h-1zM311 381h1v1h-1zM205 418h1v1h-1zM217 380h1v1h-1zM276 393h1v1h-1zM198 388h1v1h-1zM259 372h1v1h-1zM203 374h1v1h-1zM244 387h1v1h-1zM209 405h1v1h-1zM419 378h1v1h-1zM360 354h1v1h-1zM286 387h1v1h-1zM196 380h1v1h-1zM423 336h1v1h-1zM246 391h1v1h-1zM204 407h1v1h-1zM206 385h1v1h-1zM387 344h1v1h-1zM318 360h1v1h-1zM277 399h1v1h-1zM166 428h1v1h-1zM181 422h1v1h-1zM415 340h1v1h-1zM194 385h1v1h-1zM328 352h1v1h-1zM230 395h1v1h-1zM402 330h1v1h-1zM309 380h1v1h-1zM435 375h1v1h-1zM310 365h1v1h-1zM228 397h1v1h-1zM223 391h1v1h-1zM207 370h1v1h-1zM437 334h1v1h-1zM230 388h1v1h-1zM354 363h1v1h-1zM306 388h1v1h-1zM305 378h1v1h-1zM159 409h1v1h-1zM241 386h1v1h-1zM228 378h1v1h-1zM187 389h1v1h-1zM207 390h1v1h-1zM243 401h1v1h-1zM375 385h1v1h-1zM187 414h1v1h-1zM222 394h1v1h-1zM323 369h1v1h-1zM217 383h1v1h-1zM299 381h1v1h-1zM400 383h1v1h-1zM359 349h1v1h-1zM282 358h1v1h-1zM309 373h1v1h-1zM208 378h1v1h-1zM351 386h1v1h-1zM166 414h1v1h-1zM280 357h1v1h-1zM325 380h1v1h-1zM434 367h1v1h-1zM347 380h1v1h-1zM213 416h1v1h-1zM178 426h1v1h-1zM177 395h1v1h-1zM189 408h1v1h-1zM293 359h1v1h-1zM170 418h1v1h-1zM379 384h1v1h-1zM295 391h1v1h-1zM219 408h1v1h-1zM417 360h1v1h-1zM169 394h1v1h-1zM369 374h1v1h-1zM355 386h1v1h-1zM400 346h1v1h-1zM338 355h1v1h-1zM393 352h1v1h-1zM268 393h1v1h-1zM399 349h1v1h-1zM372 347h1v1h-1zM186 391h1v1h-1zM188 424h1v1h-1zM197 404h1v1h-1zM386 366h1v1h-1zM233 398h1v1h-1zM199 418h1v1h-1zM176 407h1v1h-1zM203 405h1v1h-1zM444 360h1v1h-1zM169 413h1v1h-1zM414 336h1v1h-1zM205 416h1v1h-1zM333 389h1v1h-1zM235 382h1v1h-1zM313 353h1v1h-1zM239 370h1v1h-1zM398 370h1v1h-1zM205 398h1v1h-1zM287 366h1v1h-1zM214 401h1v1h-1zM293 384h1v1h-1zM201 393h1v1h-1zM380 346h1v1h-1zM284 389h1v1h-1zM243 396h1v1h-1zM229 406h1v1h-1zM158 427h1v1h-1zM267 403h1v1h-1zM447 374h1v1h-1zM450 331h1v1h-1zM300 398h1v1h-1zM420 380h1v1h-1zM214 392h1v1h-1zM207 414h1v1h-1zM439 359h1v1h-1zM354 367h1v1h-1zM306 363h1v1h-1zM190 410h1v1h-1zM427 351h1v1h-1zM316 352h1v1h-1zM221 410h1v1h-1zM188 409h1v1h-1zM243 395h1v1h-1zM308 397h1v1h-1zM212 415h1v1h-1zM275 368h1v1h-1zM337 363h1v1h-1zM390 338h1v1h-1zM297 397h1v1h-1zM251 398h1v1h-1zM400 382h1v1h-1zM334 388h1v1h-1zM207 415h1v1h-1zM403 324h1v1h-1zM439 369h1v1h-1zM280 387h1v1h-1zM311 395h1v1h-1zM212 384h1v1h-1zM291 395h1v1h-1zM356 369h1v1h-1zM276 380h1v1h-1zM235 387h1v1h-1zM305 392h1v1h-1zM339 348h1v1h-1zM289 384h1v1h-1zM415 365h1v1h-1zM265 369h1v1h-1zM230 374h1v1h-1zM401 387h1v1h-1zM168 410h1v1h-1zM238 405h1v1h-1zM287 380h1v1h-1zM305 351h1v1h-1zM213 373h1v1h-1zM225 396h1v1h-1zM297 384h1v1h-1zM291 385h1v1h-1zM274 375h1v1h-1zM164 407h1v1h-1zM228 368h1v1h-1zM270 390h1v1h-1zM369 387h1v1h-1zM267 389h1v1h-1zM198 414h1v1h-1zM243 379h1v1h-1zM291 372h1v1h-1zM194 389h1v1h-1zM320 397h1v1h-1zM189 408h1v1h-1zM259 382h1v1h-1zM217 394h1v1h-1zM275 378h1v1h-1zM187 412h1v1h-1zM388 375h1v1h-1zM284 396h1v1h-1zM391 370h1v1h-1zM415 377h1v1h-1zM332 388h1v1h-1zM248 402h1v1h-1zM217 402h1v1h-1zM204 392h1v1h-1zM266 380h1v1h-1zM235 371h1v1h-1zM422 364h1v1h-1zM195 424h1v1h-1zM219 377h1v1h-1zM400 343h1v1h-1zM166 435h1v1h-1zM377 385h1v1h-1zM437 333h1v1h-1zM415 384h1v1h-1zM403 347h1v1h-1zM226 400h1v1h-1zM402 379h1v1h-1zM337 394h1v1h-1zM283 387h1v1h-1zM389 364h1v1h-1zM227 396h1v1h-1zM190 397h1v1h-1zM290 392h1v1h-1zM158 435h1v1h-1zM378 351h1v1h-1zM311 351h1v1h-1zM192 403h1v1h-1zM235 393h1v1h-1zM221 406h1v1h-1zM346 371h1v1h-1zM163 419h1v1h-1zM358 384h1v1h-1zM237 380h1v1h-1zM326 366h1v1h-1zM211 383h1v1h-1zM175 430h1v1h-1zM187 417h1v1h-1zM320 359h1v1h-1zM197 424h1v1h-1zM195 387h1v1h-1zM231 375h1v1h-1zM267 358h1v1h-1zM312 361h1v1h-1zM325 379h1v1h-1zM301 374h1v1h-1zM360 366h1v1h-1zM185 385h1v1h-1zM162 407h1v1h-1zM323 384h1v1h-1zM414 354h1v1h-1zM389 369h1v1h-1zM367 387h1v1h-1zM265 366h1v1h-1zM415 324h1v1h-1zM287 385h1v1h-1zM303 376h1v1h-1zM310 350h1v1h-1zM255 404h1v1h-1zM254 383h1v1h-1zM241 383h1v1h-1zM179 427h1v1h-1zM409 370h1v1h-1zM324 391h1v1h-1zM186 421h1v1h-1zM205 402h1v1h-1zM242 406h1v1h-1zM191 408h1v1h-1zM180 403h1v1h-1zM255 398h1v1h-1zM256 393h1v1h-1zM383 349h1v1h-1zM238 387h1v1h-1zM410 368h1v1h-1zM229 381h1v1h-1zM354 349h1v1h-1zM248 399h1v1h-1zM408 354h1v1h-1zM325 361h1v1h-1zM307 366h1v1h-1zM386 362h1v1h-1zM223 366h1v1h-1zM267 366h1v1h-1zM217 390h1v1h-1zM276 397h1v1h-1zM236 395h1v1h-1zM264 380h1v1h-1zM291 360h1v1h-1zM157 437h1v1h-1zM166 401h1v1h-1zM335 383h1v1h-1zM456 344h1v1h-1zM402 345h1v1h-1zM347 376h1v1h-1zM288 387h1v1h-1zM269 376h1v1h-1zM244 365h1v1h-1zM205 406h1v1h-1zM218 408h1v1h-1zM316 376h1v1h-1zM364 379h1v1h-1zM296 378h1v1h-1zM228 410h1v1h-1zM177 390h1v1h-1zM161 429h1v1h-1zM180 414h1v1h-1zM299 366h1v1h-1zM368 363h1v1h-1zM173 400h1v1h-1zM360 380h1v1h-1zM374 365h1v1h-1zM167 409h1v1h-1zM325 372h1v1h-1zM491 363h1v1h-1zM178 430h1v1h-1zM291 368h1v1h-1zM370 363h1v1h-1zM244 391h1v1h-1zM440 355h1v1h-1zM487 366h1v1h-1zM180 425h1v1h-1zM264 378h1v1h-1zM207 380h1v1h-1zM238 368h1v1h-1zM191 389h1v1h-1zM254 382h1v1h-1zM242 377h1v1h-1zM265 393h1v1h-1zM213 402h1v1h-1zM214 381h1v1h-1zM392 379h1v1h-1zM315 383h1v1h-1zM403 370h1v1h-1zM232 398h1v1h-1zM382 373h1v1h-1zM247 403h1v1h-1zM428 364h1v1h-1zM327 355h1v1h-1zM290 372h1v1h-1zM265 392h1v1h-1zM206 390h1v1h-1zM166 394h1v1h-1zM302 361h1v1h-1zM188 419h1v1h-1zM303 356h1v1h-1zM380 387h1v1h-1zM303 381h1v1h-1zM348 383h1v1h-1zM331 346h1v1h-1zM230 404h1v1h-1zM240 389h1v1h-1zM345 392h1v1h-1zM400 339h1v1h-1zM263 380h1v1h-1zM236 376h1v1h-1zM377 370h1v1h-1zM223 375h1v1h-1zM409 345h1v1h-1zM387 362h1v1h-1zM192 417h1v1h-1zM162 392h1v1h-1zM410 377h1v1h-1zM505 319h1v1h-1zM268 367h1v1h-1zM170 426h1v1h-1zM157 416h1v1h-1zM381 353h1v1h-1zM230 384h1v1h-1zM227 397h1v1h-1zM360 356h1v1h-1zM422 382h1v1h-1zM338 350h1v1h-1zM402 377h1v1h-1zM494 362h1v1h-1zM227 355h1v1h-1zM266 361h1v1h-1zM232 394h1v1h-1zM220 388h1v1h-1zM264 368h1v1h-1zM325 392h1v1h-1zM371 343h1v1h-1zM169 425h1v1h-1zM333 388h1v1h-1zM223 411h1v1h-1zM198 399h1v1h-1zM437 352h1v1h-1zM202 385h1v1h-1zM198 386h1v1h-1zM369 341h1v1h-1zM269 386h1v1h-1zM172 416h1v1h-1zM263 403h1v1h-1zM185 396h1v1h-1zM370 343h1v1h-1zM254 362h1v1h-1zM171 381h1v1h-1zM231 368h1v1h-1zM362 374h1v1h-1zM158 442h1v1h-1zM194 384h1v1h-1zM172 410h1v1h-1zM208 381h1v1h-1zM251 387h1v1h-1zM337 345h1v1h-1zM163 425h1v1h-1zM304 354h1v1h-1zM230 384h1v1h-1zM216 377h1v1h-1zM231 377h1v1h-1zM388 366h1v1h-1zM359 373h1v1h-1zM309 383h1v1h-1zM307 351h1v1h-1zM163 421h1v1h-1zM365 368h1v1h-1zM321 395h1v1h-1zM247 370h1v1h-1zM294 363h1v1h-1zM459 351h1v1h-1zM208 385h1v1h-1zM192 407h1v1h-1zM200 408h1v1h-1zM271 365h1v1h-1zM411 336h1v1h-1zM272 399h1v1h-1zM278 398h1v1h-1zM217 387h1v1h-1zM339 367h1v1h-1zM433 373h1v1h-1zM225 403h1v1h-1zM299 383h1v1h-1zM397 377h1v1h-1zM403 362h1v1h-1zM219 383h1v1h-1zM158 426h1v1h-1zM249 368h1v1h-1zM272 391h1v1h-1zM197 418h1v1h-1zM363 382h1v1h-1zM422 384h1v1h-1zM198 408h1v1h-1zM262 397h1v1h-1zM397 377h1v1h-1zM504 344h1v1h-1zM223 368h1v1h-1zM215 386h1v1h-1zM220 409h1v1h-1zM242 387h1v1h-1zM322 351h1v1h-1zM207 382h1v1h-1zM400 353h1v1h-1zM301 369h1v1h-1zM204 403h1v1h-1zM293 376h1v1h-1zM439 368h1v1h-1zM198 420h1v1h-1zM270 379h1v1h-1zM269 368h1v1h-1zM288 395h1v1h-1zM277 380h1v1h-1zM401 343h1v1h-1zM353 382h1v1h-1zM187 366h1v1h-1zM347 368h1v1h-1zM206 390h1v1h-1zM175 423h1v1h-1zM211 382h1v1h-1zM420 363h1v1h-1zM397 351h1v1h-1zM438 336h1v1h-1zM316 359h1v1h-1zM495 328h1v1h-1zM209 385h1v1h-1zM386 385h1v1h-1zM358 382h1v1h-1zM185 387h1v1h-1zM314 370h1v1h-1zM184 414h1v1h-1zM235 408h1v1h-1zM177 419h1v1h-1zM323 377h1v1h-1zM374 347h1v1h-1zM329 385h1v1h-1zM159 428h1v1h-1zM197 410h1v1h-1zM273 396h1v1h-1zM179 395h1v1h-1zM246 362h1v1h-1zM355 366h1v1h-1zM163 387h1v1h-1zM286 392h1v1h-1zM386 410h1v1h-1zM429 394h1v1h-1zM350 458h1v1h-1zM380 458h1v1h-1zM351 458h1v1h-1zM490 311h1v1h-1zM498 331h1v1h-1zM421 278h1v1h-1zM467 281h1v1h-1zM457 323h1v1h-1zM468 321h1v1h-1zM466 327h1v1h-1zM473 327h1v1h-1zM486 341h1v1h-1zM497 331h1v1h-1zM382 286h1v1h-1zM420 276h1v1h-1zM441 314h1v1h-1zM406 296h1v1h-1zM392 318h1v1h-1zM376 322h1v1h-1zM433 300h1v1h-1z" fill="#f6f632" shape-rendering="crispEdges"/>
<polyline points="156.4,270.6 156.9,284.1 158.0,292.0 159.1,333.0 160.2,292.0 161.4,263.4 162.6,270.6 164.0,264.1 165.7,272.0 170.4,310.0 171.7,264.1 172.9,270.6 175.0,264.9 176.4,272.0 179.3,292.7 182.1,265.6 184.3,270.6 185.7,266.3 187.4,284.1 189.3,266.3 190.7,269.9 192.9,254.9 195.0,263.4 197.1,272.7 198.6,267.7 200.3,274.1 202.1,257.7 205.0,275.6 207.9,265.6 209.3,270.6 210.7,322.9 212.9,273.4 214.3,272.0 216.4,257.7 218.6,274.9 220.7,267.7 222.9,270.6 225.0,269.9 226.9,276.3 228.3,266.3 230.7,273.4 232.9,275.6 235.0,268.4 239.3,278.4 242.9,270.6 247.9,282.7 251.7,266.3 255.7,275.6 257.4,274.1 259.3,293.4 260.9,335.7 262.9,277.9 265.0,268.6 267.1,270.7 269.3,274.3 272.1,276.4 275.0,281.4 278.6,280.0 283.6,276.4 289.3,277.9 293.6,279.3 296.4,283.6 297.4,273.6 299.3,290.0 303.6,283.6 306.0,276.4 309.3,290.0 312.9,280.7 314.3,292.1 315.7,331.4 317.2,300.0 318.6,282.9 320.0,286.0 322.9,284.3 325.7,289.3 328.1,296.4 330.7,285.7 332.9,283.6 334.3,288.6 335.7,284.3 337.9,295.0 339.6,290.7 341.4,295.7 342.9,289.3 344.3,299.3 346.4,289.3 347.9,296.4 349.6,283.6 352.1,297.9 355.0,288.6 356.7,302.1 358.4,333.0 360.0,298.0 361.4,290.7 363.6,303.6 367.9,292.9 372.4,300.7 375.2,298.3 378.1,302.1 381.9,311.7 384.3,308.3 385.2,316.4 386.5,337.5 388.1,306.0 390.0,298.3 393.3,312.6 395.7,303.6 397.1,305.0 399.0,303.6 401.0,319.3 402.6,350.7 404.3,309.8 405.7,315.5 407.6,306.9 409.0,310.2 411.4,301.7 413.8,308.8 416.7,318.3 420.5,310.7 422.1,342.1 423.8,317.4 426.2,314.5 428.6,322.1 431.0,312.6 432.9,317.4 436.7,326.9 439.5,321.2 443.3,314.5 445.7,327.9 448.6,322.9 450.5,325.7 452.4,322.9 455.7,331.4 457.1,327.6 461.9,338.1 467.1,332.4 469.0,334.3 470.0,342.9 471.4,372.3 473.3,337.7 474.8,338.1 477.6,331.4 479.0,336.2 481.0,330.5 482.4,341.9 485.7,344.8 491.4,346.7 493.3,361.7 494.4,367.7 496.0,349.7 498.0,353.0 500.0,350.3 501.6,353.7 503.3,397.7 505.3,355.0 508.7,353.7" fill="none" stroke="#2aaeee" stroke-width="1.2" stroke-linejoin="round"/>
</svg>
<!-- axis labels -->
<div class="abs ax" style="left:155.5px;top:163px;font-size:10.5px">MB/sec</div>
<div class="abs ax" style="left:495px;top:163px;font-size:10.5px">ms</div>
<div class="abs ax" style="left:120px;width:30.6px;text-align:right;letter-spacing:0.3px;top:170.8px">150</div>
<div class="abs ax" style="left:120px;width:30.6px;text-align:right;letter-spacing:0.3px;top:264.8px">100</div>
<div class="abs ax" style="left:120px;width:30.6px;text-align:right;letter-spacing:0.3px;top:359.8px">50</div>
<div class="abs ax" style="left:514px;top:170.8px">45</div>
<div class="abs ax" style="left:514px;top:264.8px">30</div>
<div class="abs ax" style="left:514px;top:359.8px">15</div>
<div class="abs ax" style="left:152.8px;top:462px">0</div>
<div class="abs ax" style="left:185px;top:462px">10</div>
<div class="abs ax" style="left:220px;top:462px">20</div>
<div class="abs ax" style="left:255.3px;top:462px">30</div>
<div class="abs ax" style="left:290.5px;top:462px">40</div>
<div class="abs ax" style="left:325.7px;top:462px">50</div>
<div class="abs ax" style="left:361px;top:462px">60</div>
<div class="abs ax" style="left:396.2px;top:462px">70</div>
<div class="abs ax" style="left:431.4px;top:462px">80</div>
<div class="abs ax" style="left:466.6px;top:462px">90</div>
<div class="abs ax" style="left:494.8px;top:462px;letter-spacing:0.45px">100%</div>

<!-- right panel -->
<div class="abs" style="left:564px;top:156.3px;width:73px;height:20.5px;box-sizing:border-box;border:1px solid #3c7fb1;border-radius:3px;background:linear-gradient(#f2f2f2,#ebebeb 50%,#dddddd 50%,#cfcfcf);box-shadow:inset 0 0 0 1px #48d8fb;"><span class="abs lbl" style="left:24.7px;top:3.5px;letter-spacing:-0.3px">Start</span></div>
<svg class="ic" style="left:563px;top:186px" width="13" height="13" viewBox="0 0 13 13"><circle cx="6.2" cy="6" r="5.5" fill="#e8eef3" stroke="#6d7f8e" stroke-width="1"/><circle cx="6.2" cy="6" r="3" fill="#1b5f8c"/><circle cx="5.4" cy="5" r="1.2" fill="#69b4d8"/></svg>
<svg class="ic" style="left:563px;top:202px" width="13" height="13" viewBox="0 0 13 13"><circle cx="6.2" cy="6" r="5.5" fill="#eee" stroke="#8e8f8f" stroke-width="1"/><circle cx="6.2" cy="6.3" r="3.6" fill="#dcdcdc"/></svg>
<div class="abs lbl" style="left:579.5px;top:185.5px;letter-spacing:-0.18px">Read</div>
<div class="abs lbl" style="left:579.5px;top:201.5px;letter-spacing:-0.25px">Write</div>
<div class="abs group"></div>
<div class="abs lbl" style="left:552px;top:222px;background:#fff;padding:0 3px;letter-spacing:-0.27px">Transfer rate</div>
<div class="abs lbl" style="left:552.5px;top:240px;letter-spacing:-0.55px">Minimum</div>
<div class="abs val" style="top:257.5px;color:#2aa4e8">32.7 MB/sec</div>
<div class="abs lbl" style="left:552.5px;top:276px;letter-spacing:-0.55px">Maximum</div>
<div class="abs val" style="top:293.7px;color:#2aa4e8">107.4 MB/sec</div>
<div class="abs lbl" style="left:552.5px;top:312px;letter-spacing:-0.3px">Average:</div>
<div class="abs val" style="top:329.7px;color:#2aa4e8">84.1 MB/sec</div>
<div class="abs lbl" style="left:552.5px;top:365px;letter-spacing:-0.27px">Access time:</div>
<div class="abs val" style="top:383px;color:#ffff40;letter-spacing:-0.2px">12.2 ms</div>
<div class="abs lbl" style="left:552.5px;top:407.5px;letter-spacing:-0.3px">Burst rate</div>
<div class="abs val" style="top:425.8px;color:#fff">141.6 MB/sec</div>
<div class="abs lbl" style="left:552.5px;top:449.5px;letter-spacing:-0.3px">CPU usage</div>
<div class="abs val" style="top:468px;color:#fff;letter-spacing:-0.3px">2.4%</div>
</body></html>
